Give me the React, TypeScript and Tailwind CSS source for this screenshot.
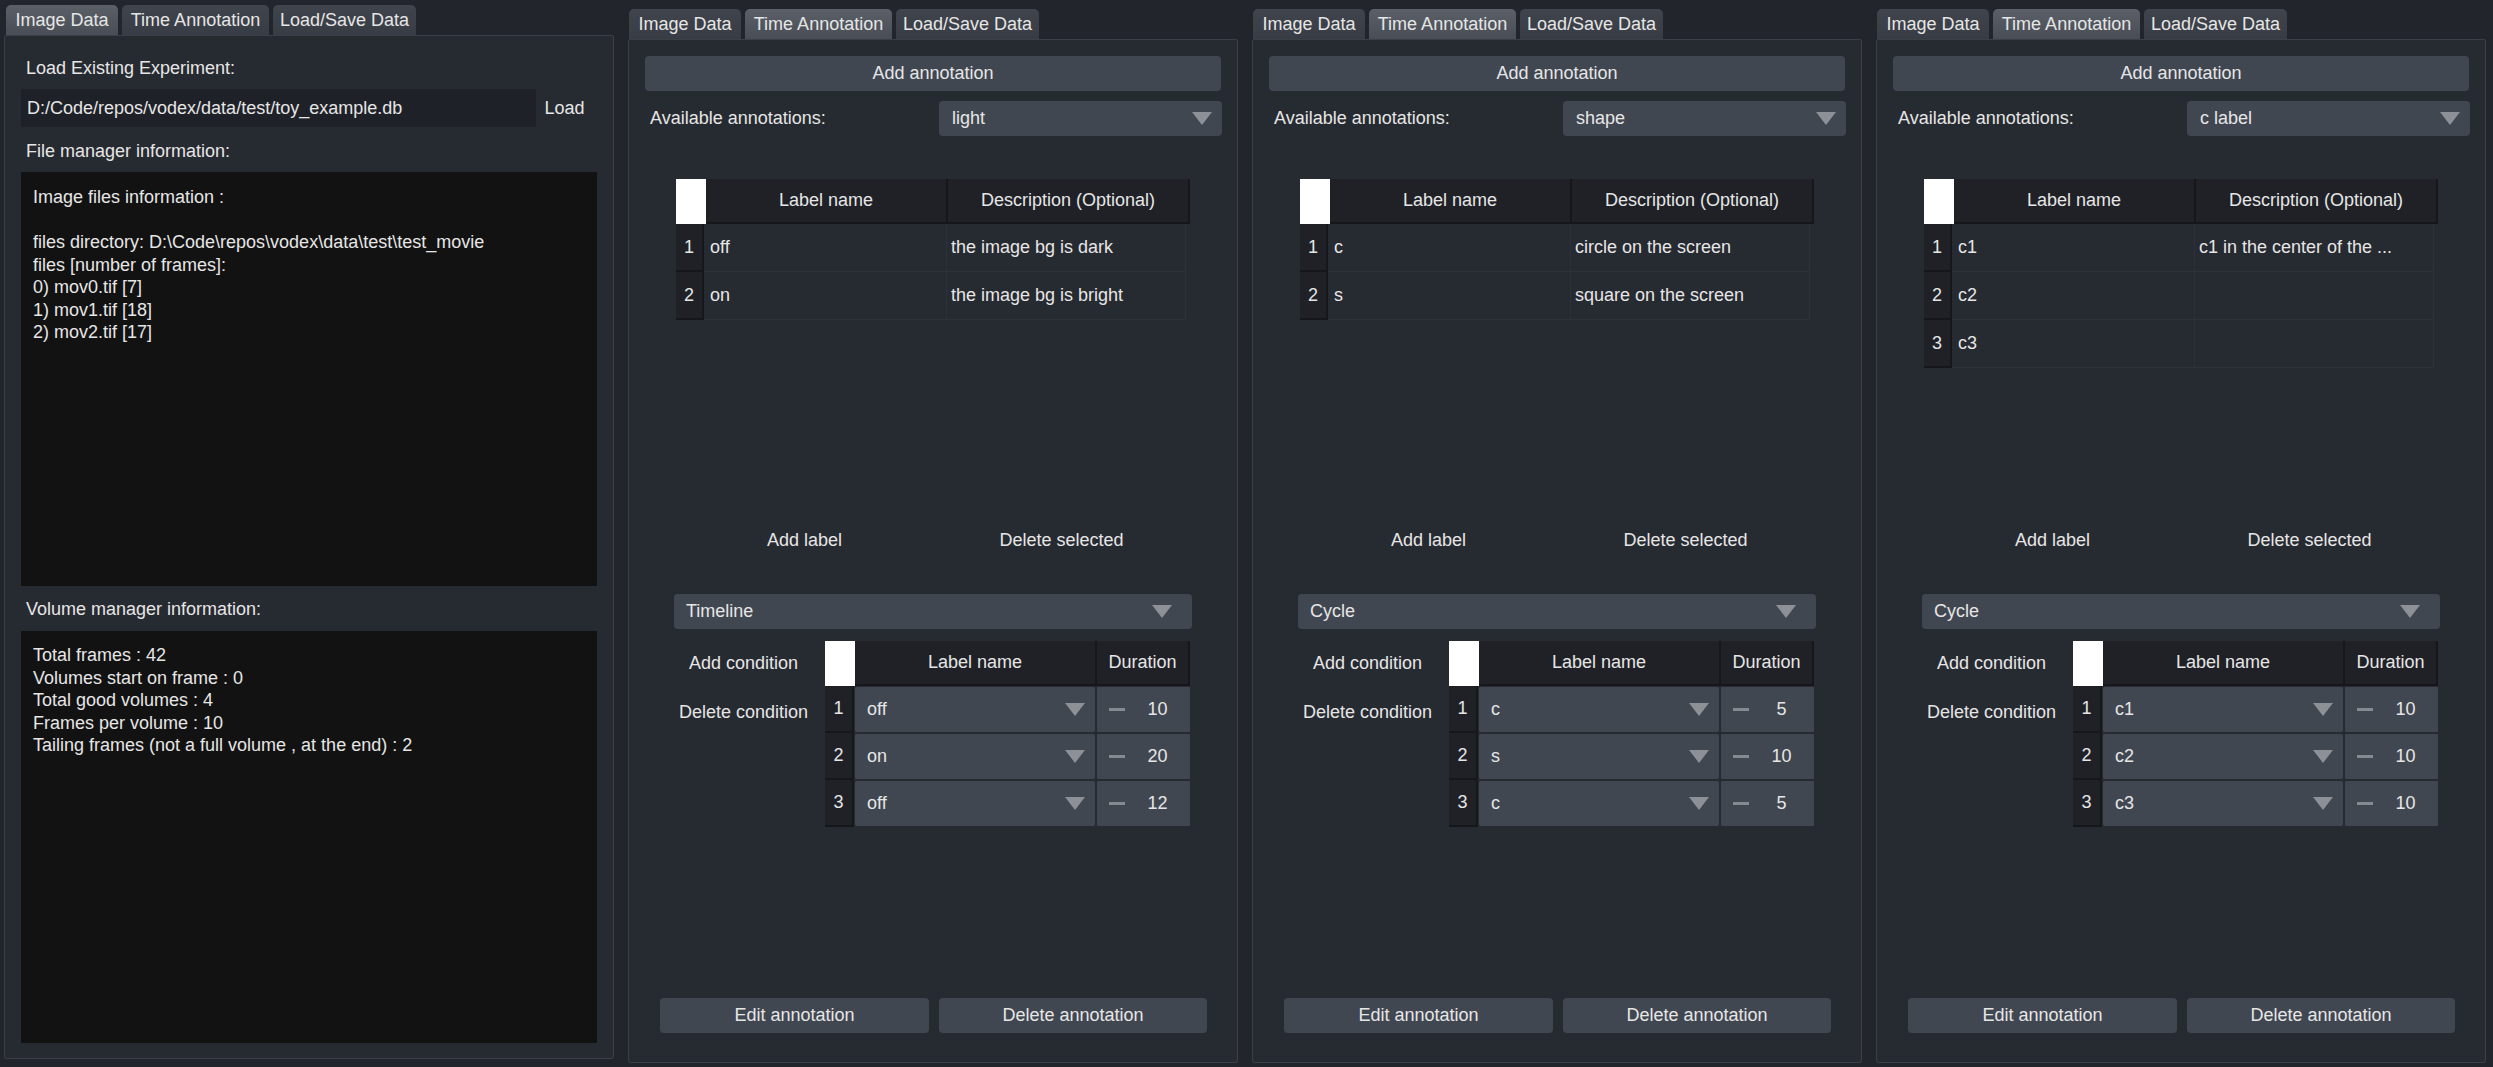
import type { ReactNode } from "react"

type Annotation = {
  value: string
  labels: [string, string][]
  kind: string
  conditions: [string, string][]
}

const annotations: Annotation[] = [
  {
    value: "light",
    labels: [
      ["off", "the image bg is dark"],
      ["on", "the image bg is bright"],
    ],
    kind: "Timeline",
    conditions: [
      ["off", "10"],
      ["on", "20"],
      ["off", "12"],
    ],
  },
  {
    value: "shape",
    labels: [
      ["c", "circle on the screen"],
      ["s", "square on the screen"],
    ],
    kind: "Cycle",
    conditions: [
      ["c", "5"],
      ["s", "10"],
      ["c", "5"],
    ],
  },
  {
    value: "c label",
    labels: [
      ["c1", "c1 in the center of the ..."],
      ["c2", ""],
      ["c3", ""],
    ],
    kind: "Cycle",
    conditions: [
      ["c1", "10"],
      ["c2", "10"],
      ["c3", "10"],
    ],
  },
]

const tabNames = ["Image Data", "Time Annotation", "Load/Save Data"]
const tabWidths = ["w-[112px]", "w-[147px]", "w-[143px]"]

function Arrow() {
  return (
    <svg width="20" height="13" viewBox="0 0 20 13" className="shrink-0">
      <polygon points="0,0 20,0 10,13" fill="#8d9096" />
    </svg>
  )
}

function Tabs({ active, offset }: { active: number; offset: string }) {
  return (
    <div className={`flex h-[30px] gap-[4px] ${offset}`}>
      {tabNames.map((name, i) => (
        <div
          key={name}
          className={`flex items-center justify-center rounded-t-[5px] ${tabWidths[i]} ${
            i === active
              ? "bg-gradient-to-b from-[#5b6068] to-[#494e56]"
              : "bg-gradient-to-b from-[#40444c] to-[#383c44]"
          }`}
        >
          {name}
        </div>
      ))}
    </div>
  )
}

function Pane({ children, className = "" }: { children: ReactNode; className?: string }) {
  return (
    <div
      className={`flex h-[1024px] flex-col rounded-[2px] border border-[#3b3f47] bg-[#262a31] ${className}`}
    >
      {children}
    </div>
  )
}

function InfoBox({ lines, className }: { lines: string[]; className: string }) {
  return (
    <div className={`ml-[16px] w-[576px] bg-[#121212] px-[12px] leading-[22.5px] ${className}`}>
      {lines.map((line, i) => (
        <div key={i} className="h-[22.5px] whitespace-pre">
          {line}
        </div>
      ))}
    </div>
  )
}

function ImageDataPanel() {
  return (
    <div className="mt-[5px] w-[610px]">
      <Tabs active={0} offset="pl-[2px]" />
      <Pane className="pt-[19px]">
        <div className="flex h-[26px] items-center pl-[21px]">Load Existing Experiment:</div>
        <div className="mt-[8px] flex h-[38px] items-center pl-[16px]">
          <div className="flex h-full w-[515px] items-center bg-[#1f2128] pl-[6px]">
            D:/Code/repos/vodex/data/test/toy_example.db
          </div>
          <div className="flex-1 pr-[20px] text-center">Load</div>
        </div>
        <div className="mt-[11px] flex h-[26px] items-center pl-[21px]">File manager information:</div>
        <InfoBox
          className="mt-[8px] h-[414px] pt-[14px]"
          lines={[
            "Image files information :",
            "",
            "files directory: D:\\Code\\repos\\vodex\\data\\test\\test_movie",
            "files [number of frames]:",
            "0) mov0.tif [7]",
            "1) mov1.tif [18]",
            "2) mov2.tif [17]",
          ]}
        />
        <div className="mt-[10px] flex h-[26px] items-center pl-[21px]">Volume manager information:</div>
        <InfoBox
          className="mt-[9px] h-[412px] pt-[13px]"
          lines={[
            "Total frames : 42",
            "Volumes start on frame : 0",
            "Total good volumes : 4",
            "Frames per volume : 10",
            "Tailing frames (not a full volume , at the end) : 2",
          ]}
        />
      </Pane>
    </div>
  )
}

function AnnotationPanel({ data }: { data: Annotation }) {
  return (
    <div className="mt-[9px] w-[610px]">
      <Tabs active={1} offset="pl-[1px]" />
      <Pane className="pt-[16px]">
        {/* top: add + choose annotation */}
        <div className="ml-[16px] flex h-[35px] w-[576px] items-center justify-center rounded-[4px] bg-[#414751]">
          Add annotation
        </div>
        <div className="mt-[10px] flex h-[35px] items-center pl-[21px]">
          <div className="w-[289px]">Available annotations:</div>
          <div className="flex h-full w-[283px] items-center justify-between rounded-[4px] bg-[#414751] pl-[13px] pr-[10px]">
            {data.value}
            <Arrow />
          </div>
        </div>

        {/* label table */}
        <div className="ml-[47px] mt-[43px] h-[343px] w-[514px]">
          <div className="flex h-[45px]">
            <div className="w-[30px] bg-white" />
            <div className="flex w-[242px] items-center justify-center border-b-2 border-r-2 border-[#15171b] bg-[#1f2127]">
              Label name
            </div>
            <div className="flex w-[242px] items-center justify-center border-b-2 border-r-2 border-[#15171b] bg-[#1f2127]">
              Description (Optional)
            </div>
          </div>
          {data.labels.map(([name, desc], i) => (
            <div key={i} className="flex h-[48px]">
              <div className="flex w-[28px] items-center justify-center border-b-2 border-r-2 border-[#15171b] bg-[#1f2127]">
                {i + 1}
              </div>
              <div className="flex w-[243px] items-center border-b border-r border-[#2d3138] pl-[6px]">{name}</div>
              <div className="flex w-[239px] items-center border-b border-r border-[#2d3138] pl-[4px]">{desc}</div>
            </div>
          ))}
        </div>

        <div className="ml-[47px] flex h-[36px] w-[514px] items-center">
          <div className="flex-1 text-center">Add label</div>
          <div className="flex-1 text-center">Delete selected</div>
        </div>

        {/* conditions */}
        <div className="ml-[45px] mt-[36px] flex h-[35px] w-[518px] items-center justify-between rounded-[4px] bg-[#414751] pl-[12px] pr-[20px]">
          {data.kind}
          <Arrow />
        </div>
        <div className="ml-[43px] mt-[12px] flex">
          <div className="flex w-[153px] flex-col pr-[10px]">
            <div className="flex h-[45px] items-center justify-center">Add condition</div>
            <div className="flex h-[52px] items-center justify-center">Delete condition</div>
          </div>
          <div>
            <div className="flex h-[45px]">
              <div className="w-[30px] bg-white" />
              <div className="flex w-[242px] items-center justify-center border-b-2 border-r-2 border-[#15171b] bg-[#1f2127]">
                Label name
              </div>
              <div className="flex w-[93px] items-center justify-center border-b-2 border-r-2 border-[#15171b] bg-[#1f2127]">
                Duration
              </div>
            </div>
            {data.conditions.map(([name, dur], i) => (
              <div key={i} className="flex h-[47px]">
                <div className="flex w-[29px] items-center justify-center border-b-2 border-r-2 border-[#15171b] bg-[#1f2127]">
                  {i + 1}
                </div>
                <div className="flex w-[242px] items-center justify-between rounded-[3px] border border-[#262a31] bg-[#414751] pl-[12px] pr-[10px]">
                  {name}
                  <Arrow />
                </div>
                <div className="flex w-[95px] items-center rounded-[2px] border border-[#262a31] bg-[#414751]">
                  <div className="flex w-[28px] justify-end">
                    <div className="h-[3px] w-[16px] bg-[#868a90]" />
                  </div>
                  <div className="flex-1 text-center">{dur}</div>
                </div>
              </div>
            ))}
          </div>
        </div>

        {/* bottom buttons */}
        <div className="mb-[29px] ml-[31px] mt-auto flex gap-[10px]">
          <div className="flex h-[35px] w-[269px] items-center justify-center rounded-[4px] bg-[#414751]">
            Edit annotation
          </div>
          <div className="flex h-[35px] w-[268px] items-center justify-center rounded-[4px] bg-[#414751]">
            Delete annotation
          </div>
        </div>
      </Pane>
    </div>
  )
}

export default function App() {
  return (
    <div className="flex h-[1067px] w-[2493px] items-start gap-[14px] overflow-hidden bg-[#22252c] pl-[4px] font-['Liberation_Sans',Arial,sans-serif] text-[18px] text-[#e6e6e6]">
      <ImageDataPanel />
      {annotations.map((a) => (
        <AnnotationPanel key={a.value} data={a} />
      ))}
    </div>
  )
}
